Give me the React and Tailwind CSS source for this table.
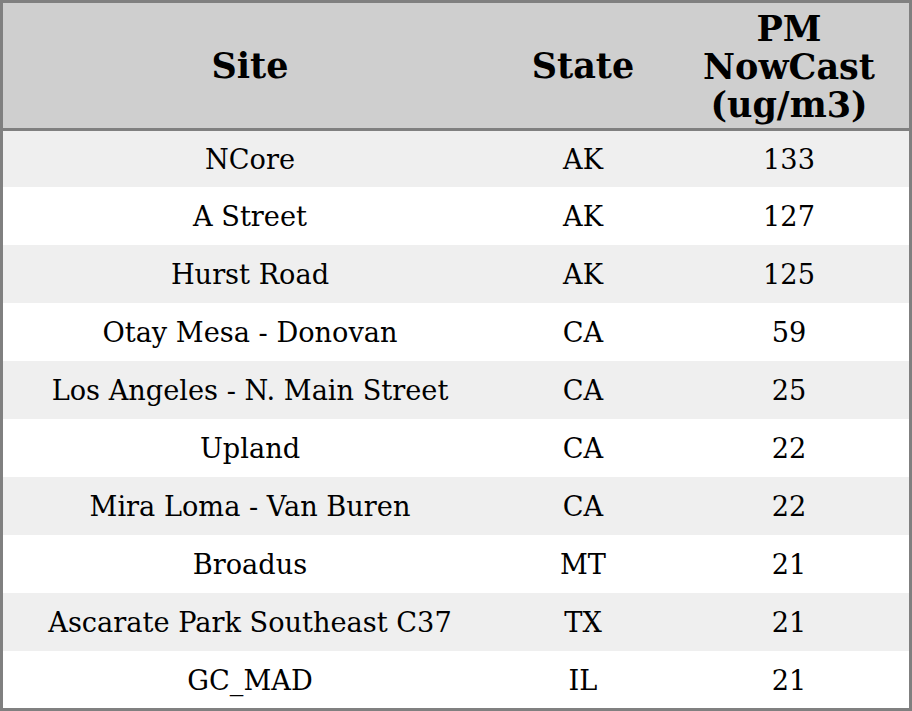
import React from "react";

const rows = [
  ["NCore", "AK", "133"],
  ["A Street", "AK", "127"],
  ["Hurst Road", "AK", "125"],
  ["Otay Mesa - Donovan", "CA", "59"],
  ["Los Angeles - N. Main Street", "CA", "25"],
  ["Upland", "CA", "22"],
  ["Mira Loma - Van Buren", "CA", "22"],
  ["Broadus", "MT", "21"],
  ["Ascarate Park Southeast C37", "TX", "21"],
  ["GC_MAD", "IL", "21"],
];

const heights = ["h-[56px]", "h-[58px]", "h-[58px]", "h-[58px]", "h-[58px]", "h-[58px]", "h-[58px]", "h-[58px]", "h-[58px]", "h-[57px]"];

export default function App() {
  return (
    <div className="w-[912px] h-[711px] bg-white" style={{ fontFamily: "'DejaVu Serif', serif" }}>
      <div className="border-[3px] border-[#808080] flex flex-col">
        <div className="grid grid-cols-[494px_172px_240px] h-[128px] bg-[#cfcfcf] border-b-[3px] border-[#808080] font-bold text-[35px] leading-[38px] text-black">
          <div className="flex items-center justify-center text-center">Site</div>
          <div className="flex items-center justify-center text-center">State</div>
          <div className="flex items-center justify-center text-center pt-[2px]">PM<br />NowCast<br />(ug/m3)</div>
        </div>
        {rows.map((r, i) => (
          <div
            key={i}
            className={`grid grid-cols-[494px_172px_240px] ${heights[i]} pt-[3px] ${i % 2 === 0 ? "bg-[#efefef]" : "bg-white"} text-[27.2px] text-black`}
          >
            <div className="flex items-center justify-center">{r[0]}</div>
            <div className="flex items-center justify-center">{r[1]}</div>
            <div className="flex items-center justify-center">{r[2]}</div>
          </div>
        ))}
      </div>
    </div>
  );
}
